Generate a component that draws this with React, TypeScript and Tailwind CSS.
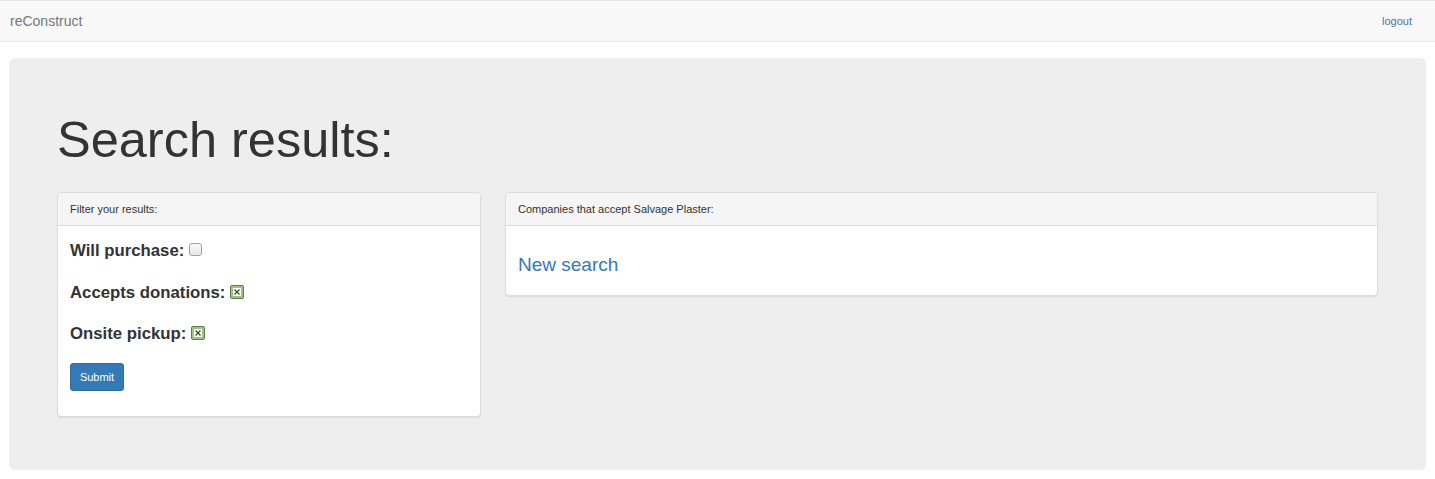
import React from 'react';

const FONT = { fontFamily: '"Liberation Sans", Arial, Helvetica, sans-serif' };

function CheckedBox() {
  return (
    <svg width="14" height="14" viewBox="0 0 14 14" className="ml-[5px] inline-block" aria-hidden="true">
      <rect x="0.5" y="0.5" width="13" height="13" rx="1.5" fill="#a3c184" stroke="#5f7f4a" />
      <rect x="3" y="3" width="8" height="8" fill="#ffffff" />
      <path d="M4.5 4.5 L9.5 9.5 M9.5 4.5 L4.5 9.5" stroke="#3b4a33" strokeWidth="1.3" />
    </svg>
  );
}

function UncheckedBox() {
  return (
    <span className="ml-[5px] inline-block h-[13px] w-[13px] rounded-[3px] border border-[#a0a0a0] bg-gradient-to-b from-[#fafafa] to-[#e6e6e6]" />
  );
}

function PanelHeader({ children }: { children: React.ReactNode }) {
  return (
    <div className="flex h-[33px] items-center border-b border-[#ddd] bg-[#f5f5f5] px-3 text-[11px] text-[#333] rounded-t-[3px]">
      {children}
    </div>
  );
}

export default function App() {
  return (
    <div style={FONT} className="min-h-[479px] bg-white text-[#333]">
      <nav className="flex h-[42px] items-center justify-between border-y border-[#e7e7e7] bg-[#f8f8f8] pl-[10px] pr-[23px]">
        <span className="text-[14px] text-[#777]">reConstruct</span>
        <a href="#" className="text-[11px] text-[#4f72a8]">logout</a>
      </nav>

      <div className="mx-[9px] mt-[16px] rounded-[6px] bg-[#eee] px-[48px] pb-[53px] pt-[54px]">
        <h1 className="mb-[24px] text-[50.5px] leading-[56px] font-normal text-[#333]">Search results:</h1>

        <div className="flex items-start gap-[24px]">
          <div className="w-[424px] rounded-[4px] border border-[#ddd] bg-white shadow-[0_1px_1px_rgba(0,0,0,0.08)]">
            <PanelHeader>Filter your results:</PanelHeader>
            <div className="flex flex-col items-start px-3 pb-[25px] pt-[15px]">
              <div className="flex h-[20px] items-center text-[16.75px] font-bold">
                Will purchase:
                <span className="-mt-[3px] flex"><UncheckedBox /></span>
              </div>
              <div className="mt-[22px] flex h-[20px] items-center text-[16.75px] font-bold">
                Accepts donations:
                <span className="-mt-[3px] flex"><CheckedBox /></span>
              </div>
              <div className="mt-[21px] flex h-[20px] items-center text-[16.75px] font-bold">
                Onsite pickup:
                <span className="-mt-[3px] flex"><CheckedBox /></span>
              </div>
              <button
                type="button"
                className="mt-[19px] h-[28px] w-[54px] rounded-[3px] border border-[#2e6da4] bg-[#337ab7] text-[11px] text-white"
              >
                Submit
              </button>
            </div>
          </div>

          <div className="flex-1 rounded-[4px] border border-[#ddd] bg-white shadow-[0_1px_1px_rgba(0,0,0,0.08)]">
            <PanelHeader>Companies that accept Salvage Plaster:</PanelHeader>
            <div className="px-3 pb-[19px] pt-[28px]">
              <a href="#" className="block text-[19px] leading-[22px] text-[#337ab7]">New search</a>
            </div>
          </div>
        </div>
      </div>
    </div>
  );
}
